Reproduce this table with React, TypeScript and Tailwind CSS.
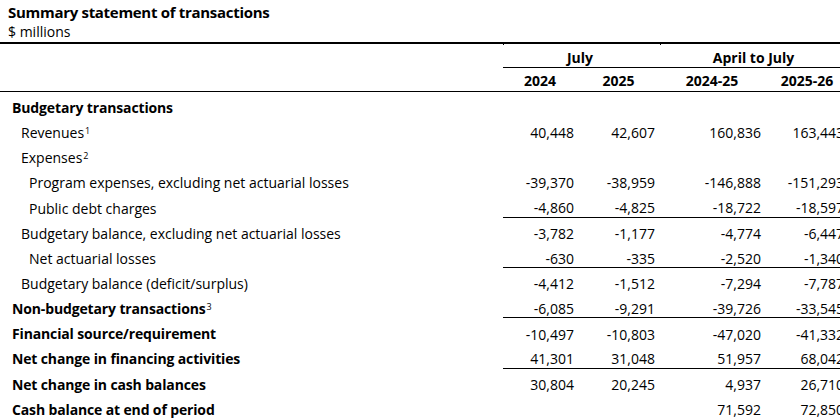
type Row = {
  label: string;
  sup?: string;
  level: 0 | 1 | 2;
  bold?: boolean;
  values: string[];
  rule?: boolean;
};

const rows: Row[] = [
  { label: "Budgetary transactions", level: 0, bold: true, values: ["", "", "", ""] },
  { label: "Revenues", sup: "1", level: 1, values: ["40,448", "42,607", "160,836", "163,443"] },
  { label: "Expenses", sup: "2", level: 1, values: ["", "", "", ""] },
  { label: "Program expenses, excluding net actuarial losses", level: 2, values: ["-39,370", "-38,959", "-146,888", "-151,293"] },
  { label: "Public debt charges", level: 2, values: ["-4,860", "-4,825", "-18,722", "-18,597"], rule: true },
  { label: "Budgetary balance, excluding net actuarial losses", level: 1, values: ["-3,782", "-1,177", "-4,774", "-6,447"] },
  { label: "Net actuarial losses", level: 2, values: ["-630", "-335", "-2,520", "-1,340"], rule: true },
  { label: "Budgetary balance (deficit/surplus)", level: 1, values: ["-4,412", "-1,512", "-7,294", "-7,787"] },
  { label: "Non-budgetary transactions", sup: "3", level: 0, bold: true, values: ["-6,085", "-9,291", "-39,726", "-33,545"], rule: true },
  { label: "Financial source/requirement", level: 0, bold: true, values: ["-10,497", "-10,803", "-47,020", "-41,332"] },
  { label: "Net change in financing activities", level: 0, bold: true, values: ["41,301", "31,048", "51,957", "68,042"], rule: true },
  { label: "Net change in cash balances", level: 0, bold: true, values: ["30,804", "20,245", "4,937", "26,710"] },
  { label: "Cash balance at end of period", level: 0, bold: true, values: ["", "", "71,592", "72,850"] },
];

const indent = ["pl-3", "pl-[21px]", "pl-[29px]"];

function Tick() {
  return <span className="absolute left-0 top-0 h-px w-px bg-black" />;
}

export default function App() {
  return (
    <div className="w-[840px] h-[418px] overflow-hidden bg-white text-black" style={{ fontFamily: '"Open Sans", sans-serif' }}>
      <div className="pl-2 pt-[2px]">
        <h1 className="text-[15px] font-bold tracking-[-0.02em] leading-[20px]">Summary statement of transactions</h1>
        <p className="text-[14px] leading-[20px]">$ millions</p>
      </div>
      <table className="border-collapse table-fixed w-[850px] text-[14px]">
        <colgroup>
          <col className="w-[503px]" />
          <col className="w-[77px]" />
          <col className="w-[80px]" />
          <col className="w-[107px]" />
          <col className="w-[83px]" />
        </colgroup>
        <thead className="border-t-2 border-black">
          <tr className="h-[24px]">
            <th />
            <th colSpan={2} className="relative border-b border-black text-center font-bold pl-[3px] pr-[6px] pt-[4px] leading-[19px]">
              <Tick />
              July
            </th>
            <th colSpan={2} className="relative border-b border-black text-center font-bold pl-[3px] pr-[6px] pt-[4px] leading-[19px]">
              <Tick />
              April to July
            </th>
          </tr>
          <tr className="h-[24px] border-b border-black">
            <th />
            {["2024", "2025", "2024-25", "2025-26"].map((h) => (
              <th key={h} className="text-center font-bold pl-[3px] pr-[6px] pt-[2px] leading-[20px]">
                {h}
              </th>
            ))}
          </tr>
        </thead>
        <tbody>
          {rows.map((r) => (
            <tr key={r.label} className="h-[25.15px]">
              <td className={`${indent[r.level]} pt-[8px] whitespace-nowrap leading-[16px] ${r.bold ? "font-bold tracking-[-0.01em]" : ""}`}>
                {r.label}
                {r.sup && <sup className="text-[9px] font-normal ml-[1px]">{r.sup}</sup>}
              </td>
              {r.values.map((v, i) => (
                <td
                  key={i}
                  className={`text-right pt-[8px] whitespace-nowrap leading-[16px] ${i === 1 ? "pr-[5px]" : "pr-[6px]"} ${r.rule ? "border-b border-black" : ""}`}
                >
                  {v}
                </td>
              ))}
            </tr>
          ))}
        </tbody>
      </table>
    </div>
  );
}
